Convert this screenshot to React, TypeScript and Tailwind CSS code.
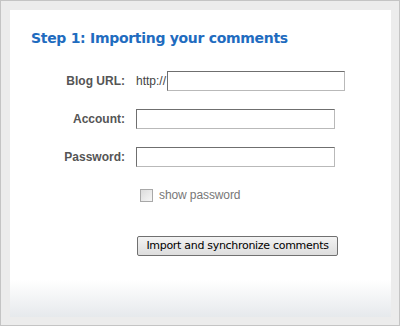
export default function App() {
  const inputCls =
    "h-[20px] border border-t-[#6f6f6f] border-l-[#6f6f6f] border-r-[#b9b9b9] border-b-[#b9b9b9] bg-white outline-none";

  return (
    <div className="w-[400px] h-[326px] border border-[#c4c4c4] bg-[#ececec] pt-[9px] pl-[9px] pr-[8px] pb-[8px] font-['Liberation_Sans',Arial,sans-serif]">
      <div className="h-[307px] bg-gradient-to-b from-white from-[88%] to-[#e6e9ec] pt-[18px] pl-[21px]">
        {/* Title */}
        <h2 className="text-[14px] leading-[20px] font-bold text-[#1f6cbf] font-['DejaVu_Sans',Verdana,sans-serif] tracking-[-0.3px]">
          Step 1: Importing your comments
        </h2>

        {/* Form */}
        <div className="mt-[23px] grid grid-cols-[94px_1fr] gap-x-[11px] gap-y-[18px] items-center">
          <label className="text-right text-[12px] font-bold text-[#555]">Blog URL:</label>
          <div className="flex items-center">
            <span className="text-[12px] text-[#444] mr-[1px]">http://</span>
            <input className={`${inputCls} w-[178px]`} />
          </div>

          <label className="text-right text-[12px] font-bold text-[#555]">Account:</label>
          <input className={`${inputCls} w-[199px]`} />

          <label className="text-right text-[12px] font-bold text-[#555]">Password:</label>
          <input type="password" className={`${inputCls} w-[199px]`} />
        </div>

        <div className="ml-[109px] mt-[22px] flex items-center">
          <span className="w-[13px] h-[13px] border border-[#a8a8a8] bg-gradient-to-br from-[#dcdcdc] to-[#f6f6f6]" />
          <span className="ml-[6px] text-[12px] leading-[13px] text-[#777] tracking-[-0.1px]">show password</span>
        </div>

        <button className="ml-[106px] mt-[34px] w-[201px] h-[20px] rounded-[2px] border border-[#707070] bg-gradient-to-b from-[#f3f3f3] to-[#dddddd] text-[11px] text-black font-['DejaVu_Sans',Tahoma,sans-serif] tracking-[-0.3px]">
          Import and synchronize comments
        </button>
      </div>
    </div>
  );
}
